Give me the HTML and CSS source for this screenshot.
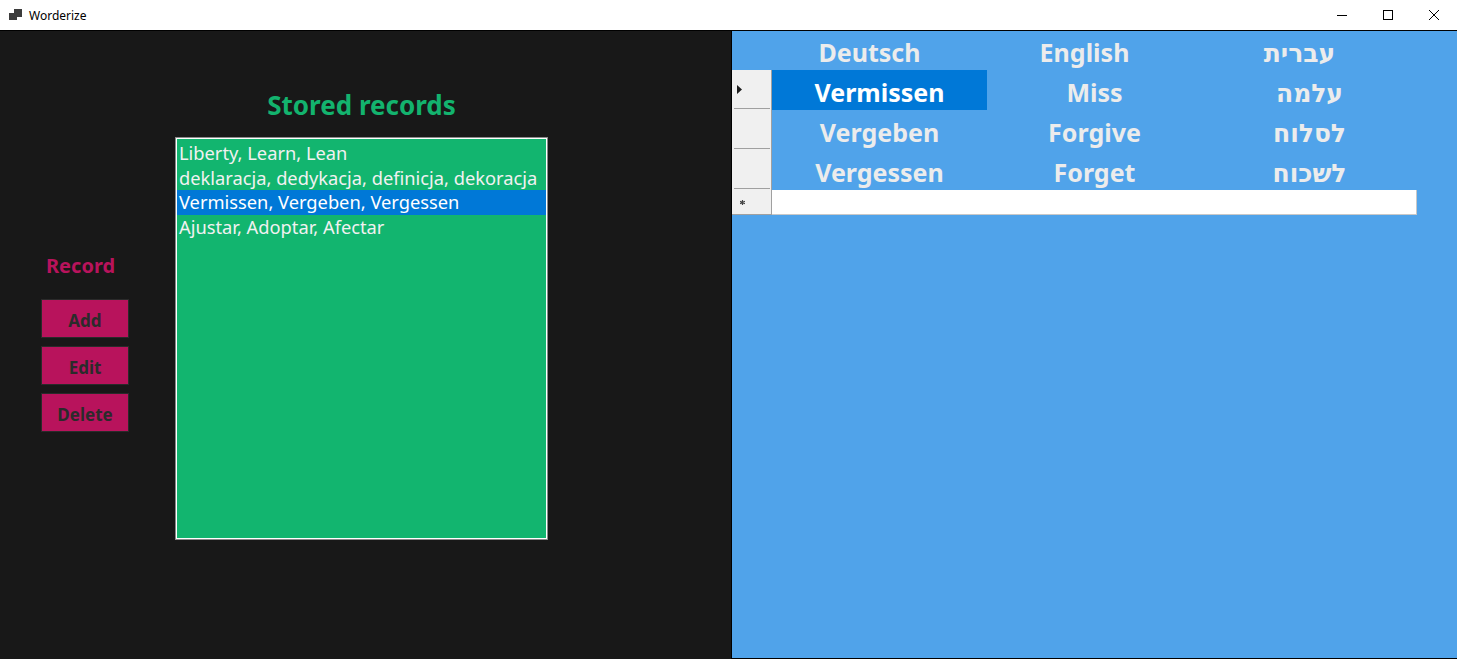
FILE: index.html
```html
<!DOCTYPE html>
<html>
<head>
<meta charset="utf-8">
<title>Worderize</title>
<link rel="stylesheet" href="styles.css">
</head>
<body>
<div class="window">
  <header class="titlebar">
    <div class="app">
      <svg class="app-icon" width="14" height="14" viewBox="0 0 14 14"><rect x="5" y="0" width="8" height="8" fill="#3c3c3c"/><rect x="0" y="4" width="5" height="7" fill="#3c3c3c"/><rect x="5" y="8" width="3" height="3" fill="#3c3c3c"/></svg>
      <span class="app-name">Worderize</span>
    </div>
    <div class="controls">
      <div class="ctl"><svg width="12" height="12" viewBox="0 0 12 12"><line x1="1" y1="6.5" x2="11" y2="6.5" stroke="#000" stroke-width="1"/></svg></div>
      <div class="ctl"><svg width="12" height="12" viewBox="0 0 12 12"><rect x="1.5" y="1.5" width="9" height="9" fill="none" stroke="#000" stroke-width="1"/></svg></div>
      <div class="ctl"><svg width="12" height="12" viewBox="0 0 12 12"><path d="M1 1 L11 11 M11 1 L1 11" stroke="#000" stroke-width="1"/></svg></div>
    </div>
  </header>
  <main class="main">
    <section class="left">
      <div class="record-col">
        <div class="record-label">Record</div>
        <div class="buttons">
          <button class="btn">Add</button>
          <button class="btn">Edit</button>
          <button class="btn">Delete</button>
        </div>
      </div>
      <div class="list-col">
        <h1 class="list-title">Stored records</h1>
        <div class="listbox">
          <div class="item">Liberty, Learn, Lean</div>
          <div class="item">deklaracja, dedykacja, definicja, dekoracja</div>
          <div class="item selected">Vermissen, Vergeben, Vergessen</div>
          <div class="item">Ajustar, Adoptar, Afectar</div>
        </div>
      </div>
    </section>
    <section class="right">
      <div class="grid">
        <div class="corner"></div>
        <div class="head">Deutsch</div>
        <div class="head">English</div>
        <div class="head">עברית</div>

        <div class="rowhead"><div class="rh-body"><svg width="5" height="9" viewBox="0 0 5 9"><path d="M0 0 L5 4.5 L0 9 Z" fill="#1e1e1e"/></svg></div><div class="rh-sep"></div></div>
        <div class="cell current">Vermissen</div>
        <div class="cell">Miss</div>
        <div class="cell">עלמה</div>

        <div class="rowhead"><div class="rh-body"></div><div class="rh-sep"></div></div>
        <div class="cell">Vergeben</div>
        <div class="cell">Forgive</div>
        <div class="cell">לסלוח</div>

        <div class="rowhead"><div class="rh-body"></div><div class="rh-sep"></div></div>
        <div class="cell">Vergessen</div>
        <div class="cell">Forget</div>
        <div class="cell">לשכוח</div>

        <div class="rowhead newrow-head"><div class="rh-body"><svg width="5" height="5" viewBox="0 0 5 5"><path d="M2.5 0 V5 M0 1.2 L5 3.8 M5 1.2 L0 3.8" stroke="#444" stroke-width="1.2"/></svg></div></div>
        <div class="newrow"></div>
      </div>
    </section>
  </main>
</div>
</body>
</html>
```

FILE: styles.css
```css
* { box-sizing: border-box; }

html, body {
  margin: 0;
  padding: 0;
}

body {
  width: 1457px;
  height: 659px;
  overflow: hidden;
  font-family: "Noto Sans", "DejaVu Sans", sans-serif;
  background: #181818;
}

.window {
  display: flex;
  flex-direction: column;
  height: 659px;
}

/* title bar */
.titlebar {
  height: 30px;
  flex: 0 0 30px;
  background: #ffffff;
  display: flex;
  align-items: center;
  justify-content: space-between;
}

.app {
  display: flex;
  align-items: center;
  padding-left: 9px;
}

.app-icon {
  margin-top: 1px;
}

.app-name {
  margin-left: 6px;
  font-size: 12px;
  color: #000;
  font-family: "Noto Sans", sans-serif;
}

.controls {
  display: flex;
  height: 30px;
}

.ctl {
  width: 46px;
  height: 30px;
  display: flex;
  align-items: center;
  justify-content: center;
}

/* main */
.main {
  flex: 1;
  display: flex;
  border-top: 1px solid #000;
}

.left {
  flex: 0 0 731px;
  background: #181818;
  display: flex;
  align-items: flex-start;
  padding-left: 41px;
}

.record-col {
  width: 88px;
  display: flex;
  flex-direction: column;
  padding-top: 223px;
}

.record-label {
  color: #b8135c;
  font-weight: 700;
  font-size: 20px;
  line-height: 24px;
  padding-left: 5px;
}

.buttons {
  margin-top: 21px;
  display: flex;
  flex-direction: column;
  gap: 8px;
}

.btn {
  width: 88px;
  height: 39px;
  background: #b8135c;
  border: 1px solid #2a2a2a;
  color: #2b2b2b;
  font-family: "Noto Sans", sans-serif;
  font-weight: 700;
  font-size: 17px;
  padding: 3px 0 0 0;
  margin: 0;
}

.list-col {
  margin-left: 46px;
  width: 373px;
  display: flex;
  flex-direction: column;
  align-items: center;
  padding-top: 57px;
}

.list-title {
  margin: 0;
  color: #13b36e;
  font-size: 26px;
  font-weight: 700;
  line-height: 34px;
  height: 49px;
}

.listbox {
  width: 373px;
  height: 403px;
  background: #12b56f;
  border: 1px solid #8a8a8a;
  box-shadow: inset 0 0 0 1px #ffffff;
  padding: 3px 1px 1px 1px;
}

.item {
  height: 24.5px;
  line-height: 24px;
  font-size: 18.3px;
  color: #f1f1f1;
  padding-left: 2px;
  white-space: nowrap;
}

.item.selected {
  background: #0078d7;
  color: #ffffff;
}

/* right panel */
.right {
  flex: 1;
  background: #50a3ea;
  border-left: 1px solid #000;
  border-bottom: 1px solid #000;
}

.grid {
  display: grid;
  grid-template-columns: 40px 215px 215px 215px;
  grid-template-rows: 39px 40px 40px 40px 25px;
}

.corner {
  background: transparent;
}

.head {
  display: flex;
  align-items: center;
  justify-content: center;
  padding: 2px 20px 0 0;
  color: #ececec;
  font-weight: 700;
  font-size: 25px;
}

.rowhead {
  background: #f0f0f0;
  border-right: 1px solid #a0a0a0;
  display: flex;
  flex-direction: column;
}

.rh-body {
  flex: 1;
  display: flex;
  align-items: center;
  padding-left: 5px;
}

.rh-sep {
  height: 1px;
  margin: 0 1px 1px 2px;
  background: #a0a0a0;
}

.newrow-head {
  border-bottom: 1px solid #a0a0a0;
}

.newrow-head .rh-body {
  padding-left: 8px;
  padding-top: 1px;
}

.cell {
  display: flex;
  align-items: center;
  justify-content: center;
  padding-top: 3px;
  color: #ececec;
  font-weight: 700;
  font-size: 25px;
}

.cell.current {
  background: #0078d7;
  color: #ffffff;
}

.newrow {
  grid-column: 2 / 5;
  background: #ffffff;
  border-right: 1px solid #c8c8c8;
  border-bottom: 1px solid #c8c8c8;
}
```
